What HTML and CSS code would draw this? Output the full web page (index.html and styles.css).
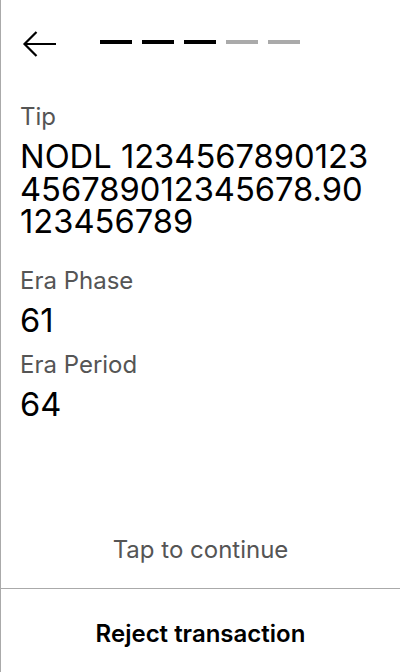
FILE: index.html
```html
<!DOCTYPE html>
<html>
<head>
<meta charset="utf-8">
<link rel="stylesheet" href="styles.css">
</head>
<body>
<div class="screen">
  <div class="header">
    <svg class="back" width="34" height="28" viewBox="0 0 34 28">
      <path d="M34 13H2.5M14.5 1L2.5 13L14.5 25" fill="none" stroke="#000" stroke-width="2.2"/>
    </svg>
    <div class="steps">
      <span class="step done"></span>
      <span class="step done"></span>
      <span class="step done"></span>
      <span class="step"></span>
      <span class="step"></span>
    </div>
  </div>
  <div class="content">
    <div class="field field-long">
      <div class="label">Tip</div>
      <div class="value">NODL 1234567890123 456789012345678.90 123456789</div>
    </div>
    <div class="field">
      <div class="label">Era Phase</div>
      <div class="value">61</div>
    </div>
    <div class="field">
      <div class="label">Era Period</div>
      <div class="value">64</div>
    </div>
  </div>
  <div class="tap">Tap to continue</div>
  <div class="reject">Reject transaction</div>
</div>
</body>
</html>
```
FILE: styles.css
```css
html, body {
  margin: 0;
  padding: 0;
  background: #fff;
}
body {
  font-family: Inter, "Noto Sans", sans-serif;
  color: #000;
}
.screen {
  width: 399px;
  height: 672px;
  border-left: 1px solid #aaa;
  display: flex;
  flex-direction: column;
  overflow: hidden;
}
.header {
  display: flex;
  align-items: center;
  padding: 31px 0 0 21px;
  height: 28px;
}
.back {
  display: block;
}
.steps {
  display: flex;
  gap: 10px;
  margin-left: 44px;
  margin-top: -7px;
}
.step {
  width: 32px;
  height: 4px;
  background: #aaa;
}
.step.done {
  background: #000;
}
.content {
  padding: 43px 19px 0 19px;
  flex: 1;
}
.field {
  margin-bottom: 14px;
}
.field-long {
  margin-bottom: 28px;
}
.label {
  font-size: 24px;
  line-height: 29px;
  color: #555;
  margin-bottom: 9px;
}
.value {
  font-size: 32.7px;
  line-height: 32.5px;
  width: 362px;
}
.tap {
  text-align: center;
  font-size: 24px;
  line-height: 29px;
  color: #555;
  padding-bottom: 24px;
}
.reject {
  box-sizing: border-box;
  border-top: 1px solid #aaa;
  height: 84px;
  padding-top: 5px;
  display: flex;
  align-items: center;
  justify-content: center;
  font-size: 24px;
  font-weight: 600;
}
```
